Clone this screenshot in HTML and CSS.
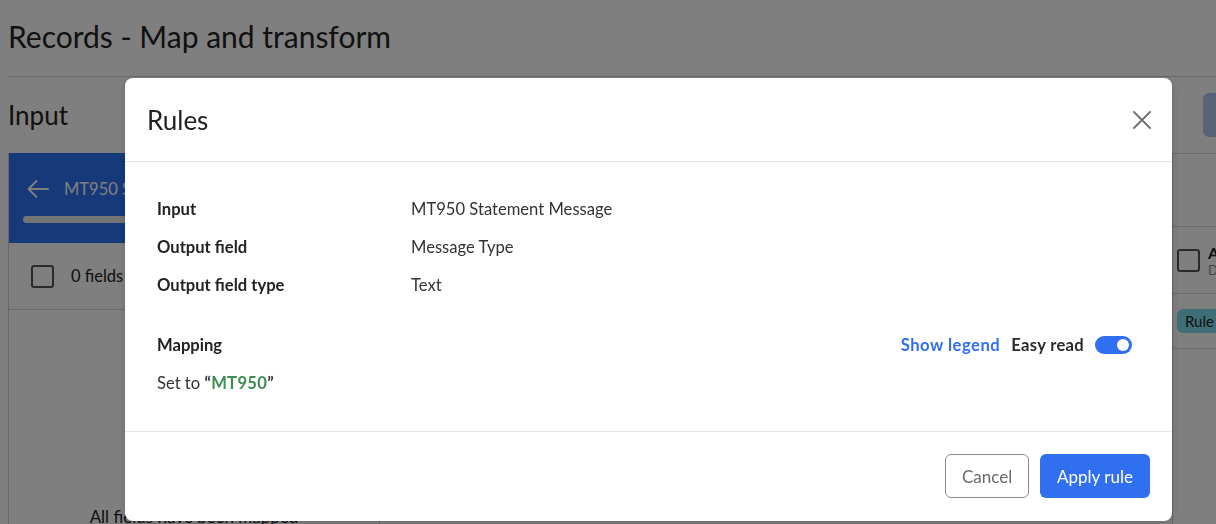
FILE: index.html
```html
<!DOCTYPE html>
<html lang="en">
<head>
    <meta charset="UTF-8">
    <meta name="viewport" content="width=device-width, initial-scale=1.0">
    <title>Records - Map and transform</title>
    <link rel="stylesheet" href="styles.css">
</head>
<body>
    <div class="page">
        <h1 class="title">Records - Map and transform</h1>
        <div class="toolbar">
            <h2 class="section-title">Input</h2>
            <button class="ghost-btn" type="button">Save</button>
        </div>
        <div class="workspace">
            <div class="input-panel">
                <div class="panel-head">
                    <div class="panel-name">
                        <svg width="22" height="22" viewBox="0 0 22 22" fill="none" stroke="#fff" stroke-width="1.8" stroke-linecap="round" stroke-linejoin="round"><path d="M21 11H1.5M9.5 3l-8 8 8 8"/></svg>
                        <span>MT950 Statement Message</span>
                    </div>
                    <div class="progress"></div>
                </div>
                <div class="select-row">
                    <span class="checkbox"></span>
                    <span>0 fields selected</span>
                </div>
                <div class="panel-empty">All fields have been mapped</div>
            </div>
            <div class="output-panel">
                <div class="out-head"></div>
                <div class="out-row">
                    <span class="checkbox"></span>
                    <div class="out-field">
                        <b>Account</b>
                        <span class="out-sub">Data</span>
                    </div>
                </div>
                <div class="out-row short">
                    <span class="badge">Rule</span>
                </div>
            </div>
        </div>
    </div>

    <div class="overlay">
        <div class="modal">
            <div class="modal-header">
                <h3>Rules</h3>
                <button class="close" type="button" aria-label="Close">
                    <svg width="18" height="18" viewBox="0 0 18 18" fill="none" stroke="#6f6f6f" stroke-width="1.8" stroke-linecap="round"><path d="M1 1l16 16M17 1L1 17"/></svg>
                </button>
            </div>
            <div class="modal-body">
                <div class="details">
                    <span class="label">Input</span>
                    <span>MT950 Statement Message</span>
                    <span class="label">Output field</span>
                    <span>Message Type</span>
                    <span class="label">Output field type</span>
                    <span>Text</span>
                </div>
                <div class="mapping-head">
                    <span class="label">Mapping</span>
                    <div class="mapping-tools">
                        <a class="legend" href="#">Show legend</a>
                        <span class="easy">Easy read</span>
                        <span class="toggle"><span class="knob"></span></span>
                    </div>
                </div>
                <div class="mapping-rule">Set to <b>&ldquo;<span class="literal">MT950</span>&rdquo;</b></div>
            </div>
            <div class="modal-footer">
                <button class="btn btn-outline" type="button">Cancel</button>
                <button class="btn btn-primary" type="button">Apply rule</button>
            </div>
        </div>
    </div>
</body>
</html>
```

FILE: styles.css
```css
body {
    margin: 0;
    font-family: Lato, "Noto Sans", sans-serif;
    color: #222;
    background: #fff;
    overflow: hidden;
}
.page {
    padding: 0 0 0 8px;
}
.title {
    margin: 0;
    padding: 16px 0 20px;
    font-size: 30px;
    line-height: 40px;
    font-weight: 400;
    border-bottom: 1px solid #d6d6d6;
}
.toolbar {
    display: flex;
    justify-content: space-between;
    align-items: center;
    height: 76px;
}
.section-title {
    margin: 0;
    font-size: 26px;
    font-weight: 400;
}
.ghost-btn {
    width: 60px;
    height: 44px;
    margin-right: -47px;
    border: none;
    border-radius: 6px;
    background: #b5c9f0;
    color: transparent;
}
.workspace {
    display: flex;
    justify-content: space-between;
}
.input-panel {
    width: 370px;
    height: 380px;
    border-left: 1px solid #cfcfcf;
    border-right: 1px solid #cfcfcf;
    display: flex;
    flex-direction: column;
}
.panel-head {
    background: #2c73f5;
    height: 90px;
    padding: 25px 0 0 14px;
    box-sizing: border-box;
    color: #fff;
}
.panel-name {
    display: flex;
    align-items: center;
    gap: 15px;
    padding-left: 4px;
    font-size: 16.5px;
}
.progress {
    height: 7px;
    margin-top: 16px;
    border-radius: 4px;
    background: #e8e8e8;
}
.select-row {
    display: flex;
    align-items: center;
    gap: 17px;
    height: 66px;
    padding-left: 22px;
    border-bottom: 1px solid #d6d6d6;
    font-size: 16.5px;
}
.checkbox {
    width: 19px;
    height: 19px;
    border: 2px solid #555;
    border-radius: 3px;
    flex-shrink: 0;
}
.panel-empty {
    margin-top: auto;
    text-align: center;
    font-size: 17px;
    padding-bottom: 6px;
}
.output-panel {
    width: 43px;
    border-left: 1px solid #cfcfcf;
}
.out-head {
    height: 72px;
    border-top: 1px solid #d6d6d6;
    border-bottom: 1px solid #d6d6d6;
}
.out-row {
    display: flex;
    align-items: center;
    gap: 8px;
    height: 66px;
    padding-left: 4px;
    border-bottom: 1px solid #d6d6d6;
    white-space: nowrap;
}
.out-row.short {
    height: 54px;
}
.out-field {
    display: flex;
    flex-direction: column;
    font-size: 16px;
}
.out-sub {
    font-size: 13px;
    color: #888;
}
.badge {
    background: #7fdcec;
    border-radius: 6px;
    padding: 3px 8px;
    font-size: 15px;
}

.overlay {
    position: fixed;
    inset: 0;
    background: rgba(0, 0, 0, 0.5);
    padding: 78px 0 0 125px;
}
.modal {
    width: 1047px;
    background: #fff;
    border-radius: 8px;
    box-shadow: 0 2px 10px rgba(0, 0, 0, 0.15);
}
.modal-header {
    display: flex;
    justify-content: space-between;
    align-items: center;
    height: 83px;
    padding: 0 21px 0 22px;
    border-bottom: 1px solid #e3e5e8;
}
.modal-header h3 {
    margin: 0;
    font-size: 26px;
    font-weight: 400;
    color: #222;
}
.close {
    border: none;
    background: none;
    padding: 0;
    display: flex;
}
.modal-body {
    padding: 35px 40px 36px 32px;
    font-size: 16.6px;
    line-height: 24px;
    color: #333;
}
.details {
    display: grid;
    grid-template-columns: 254px 1fr;
    row-gap: 14px;
}
.label {
    font-weight: 700;
    color: #222;
}
.mapping-head {
    display: flex;
    justify-content: space-between;
    align-items: center;
    margin-top: 36px;
}
.mapping-tools {
    display: flex;
    align-items: center;
    gap: 11px;
}
.legend {
    color: #2f6ff0;
    font-weight: 700;
    letter-spacing: 0.5px;
    text-decoration: none;
}
.easy {
    font-weight: 700;
    letter-spacing: 0.3px;
    color: #2a2a2a;
}
.toggle {
    width: 37px;
    height: 18px;
    border-radius: 9px;
    background: #2f6ff0;
    display: flex;
    align-items: center;
    justify-content: flex-end;
    padding-right: 3px;
    box-sizing: border-box;
}
.knob {
    width: 12px;
    height: 12px;
    border-radius: 50%;
    background: #fff;
}
.mapping-rule {
    margin-top: 14px;
}
.mapping-rule b {
    letter-spacing: 0.3px;
}
.literal {
    color: #3b8d52;
}
.modal-footer {
    display: flex;
    justify-content: flex-end;
    gap: 11px;
    padding: 22px 22px 23px;
    border-top: 1px solid #e3e5e8;
}
.btn {
    height: 44px;
    border-radius: 6px;
    font-family: inherit;
    font-size: 17px;
    padding: 0 16px;
}
.btn-outline {
    width: 84px;
    background: #fff;
    border: 1px solid #8a8a8a;
    color: #6a6a6a;
}
.btn-primary {
    width: 110px;
    background: #2f6ff0;
    border: none;
    color: #fff;
}
```
